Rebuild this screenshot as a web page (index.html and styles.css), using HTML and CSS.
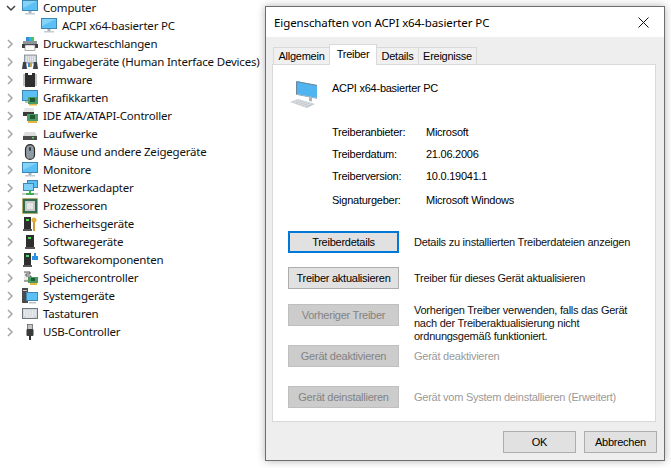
FILE: index.html
```html
<!DOCTYPE html>
<html lang="de">
<head>
  <meta charset="UTF-8" />
  <title>Geräte-Manager</title>
  <link rel="stylesheet" href="styles.css">
</head>
<body>

  <svg class="defs" width="0" height="0">
    <symbol id="chev" viewBox="0 0 8 10"><path d="M2 1l4 4-4 4" fill="none" stroke="#a6a6a6" stroke-width="1.5"/></symbol>
    <symbol id="chev-open" viewBox="0 0 10 8"><path d="M1 2l4 4 4-4" fill="none" stroke="#404040" stroke-width="1.5"/></symbol>
    <symbol id="monitor" viewBox="0 0 16 16"><rect x="0" y="0" width="16" height="11" fill="#3f87b3"/><rect x="1" y="1" width="14" height="9" fill="#5cc0f5"/><path d="M1 1h14L1 8z" fill="#86d3fa"/><rect x="6.5" y="11" width="3" height="2" fill="#a8b4bc"/><rect x="3" y="13" width="10" height="1.5" fill="#c4ccd2"/></symbol>
    <symbol id="printer" viewBox="0 0 16 16"><rect x="4" y="1" width="3" height="4" fill="#2f8fe0"/><rect x="7" y="1" width="3" height="4" fill="#35b8c4"/><rect x="10" y="1" width="2" height="4" fill="#4fc25a"/><rect x="1" y="5" width="14" height="3" fill="#8d959b"/><rect x="0" y="8" width="16" height="4" fill="#3e3e3e"/><rect x="3" y="9" width="10" height="5.5" fill="#fafafa" stroke="#777" stroke-width=".6"/></symbol>
    <symbol id="hid" viewBox="0 0 16 16"><rect x="2.5" y="1" width="12" height="8" fill="#c8ced3" stroke="#6d7780" stroke-width=".7"/><path d="M4 3h9M4 5h9M4 7h9" stroke="#fff" stroke-dasharray="1 1"/><path d="M0 15l1-7h3l1 7zM11 15l1-7h3l1 7z" fill="#3c4248"/><rect x="6" y="9" width="2" height="4" fill="#2f8fe0"/><rect x="8" y="9" width="2" height="4" fill="#d9a23a"/></symbol>
    <symbol id="chip" viewBox="0 0 16 16"><rect x="3" y="1" width="10" height="14" fill="#2e2e2e"/><rect x="6" y="1" width="4" height="2" fill="#fff"/><path d="M1 3h2M1 5h2M1 7h2M1 9h2M1 11h2M1 13h2M13 3h2M13 5h2M13 7h2M13 9h2M13 11h2M13 13h2" stroke="#8a8a8a"/></symbol>
    <symbol id="gpu" viewBox="0 0 16 16"><rect x="0" y="0" width="16" height="11" fill="#3f87b3"/><rect x="1" y="1" width="14" height="9" fill="#5cc0f5"/><rect x="3" y="11" width="6" height="2" fill="#b9c2c8"/><rect x="6" y="7" width="10" height="7" fill="#4c9a63"/><rect x="8" y="8" width="5" height="4" fill="#1f5a34"/><rect x="7" y="14" width="8" height="1.5" fill="#e5b53d"/></symbol>
    <symbol id="ide" viewBox="0 0 16 16"><path d="M3 0h9v4H1z" fill="#e4e4e4"/><rect x="1" y="4" width="11" height="4" fill="#3a3a3a"/><rect x="5" y="6" width="11" height="7" fill="#4c9a63"/><rect x="8" y="7" width="5" height="4" fill="#1f5a34"/><rect x="6" y="13" width="9" height="2" fill="#e5b53d"/></symbol>
    <symbol id="drive" viewBox="0 0 16 16"><path d="M3 6h10l2 4H1z" fill="#dcdcdc"/><rect x="1" y="10" width="14" height="4" fill="#4a4a4a"/><rect x="10" y="11" width="2" height="1.5" fill="#4fdc5a"/></symbol>
    <symbol id="mouse" viewBox="0 0 16 16"><rect x="3.5" y="0.6" width="9" height="14.8" rx="4.5" fill="#8f9aa3" stroke="#2c2c2c" stroke-width="1.2"/><rect x="7" y="3" width="2" height="4" rx="1" fill="#3c4248"/></symbol>
    <symbol id="net" viewBox="0 0 16 16"><rect x="5.5" y="0.5" width="10" height="7" fill="#5cc0f5" stroke="#3f87b3"/><rect x="1.5" y="3.5" width="10" height="7" fill="#7fd0f8" stroke="#3f87b3"/><rect x="0" y="13" width="16" height="2" fill="#c4ccd2"/><path d="M8 10v4M4 14h8" stroke="#3fae4e" stroke-width="2"/></symbol>
    <symbol id="cpu" viewBox="0 0 16 16"><rect x="0.5" y="0.5" width="15" height="15" fill="#2f6b4c" stroke="#c9a63a" stroke-dasharray="1 1"/><rect x="2" y="2" width="12" height="12" fill="#2f6b4c"/><rect x="3" y="3" width="10" height="10" fill="#c9c9c9"/><rect x="5" y="5" width="6" height="6" fill="#e6e6e6"/></symbol>
    <symbol id="sec" viewBox="0 0 16 16"><rect x="2" y="1" width="7" height="13" fill="#2e2e2e"/><rect x="1" y="13" width="9" height="2" fill="#555"/><rect x="4" y="3" width="3" height="2" fill="#4fdc5a"/><circle cx="12" cy="4" r="2.5" fill="#e0b040"/><rect x="11" y="6" width="2" height="9" fill="#d39c2e"/></symbol>
    <symbol id="soft" viewBox="0 0 16 16"><rect x="4" y="1" width="8" height="13" fill="#2e2e2e"/><rect x="3" y="13" width="10" height="2" fill="#555"/><rect x="6" y="3" width="3" height="2" fill="#4fdc5a"/></symbol>
    <symbol id="softc" viewBox="0 0 16 16"><rect x="2" y="1" width="7" height="13" fill="#2e2e2e"/><rect x="1" y="13" width="9" height="2" fill="#555"/><rect x="4" y="3" width="3" height="2" fill="#4fdc5a"/><rect x="10" y="4" width="6" height="4" fill="#2f8fe0"/><rect x="12" y="1" width="2" height="3" fill="#2f8fe0"/></symbol>
    <symbol id="store" viewBox="0 0 16 16"><path d="M2 2h6v2H4v2h5v5H2" fill="#e8e8e8" stroke="#444" stroke-width=".9"/><rect x="6" y="7" width="10" height="6" fill="#4c9a63"/><rect x="9" y="8" width="4" height="3" fill="#1f5a34"/><rect x="8" y="13" width="7" height="2" fill="#e5b53d"/></symbol>
    <symbol id="sys" viewBox="0 0 16 16"><rect x="0" y="0" width="6" height="15" fill="#4a4a4a"/><rect x="1" y="2" width="4" height="1" fill="#c8c8c8"/><rect x="4.5" y="4.5" width="11" height="8" fill="#5cc0f5" stroke="#3f87b3"/><rect x="7" y="14" width="7" height="1.5" fill="#b9c2c8"/></symbol>
    <symbol id="kbd" viewBox="0 0 16 16"><rect x="0.5" y="2.5" width="15" height="10" fill="#d2d7db" stroke="#6d7780"/><path d="M2 5h12M2 7h12M2 9h12M4 11h8" stroke="#fff" stroke-dasharray="1 .6"/></symbol>
    <symbol id="usb" viewBox="0 0 16 16"><rect x="5.5" y="0.5" width="5" height="5" fill="#c4c4c4" stroke="#555" stroke-width=".7"/><rect x="4.5" y="5" width="7" height="7" rx="1" fill="#3a3a3a"/><rect x="7" y="12" width="2" height="4" fill="#333"/></symbol>
  </svg>

  <ul class="tree">
    <li class="row"><svg class="chev-open"><use href="#chev-open"/></svg><svg class="ico"><use href="#monitor"/></svg>Computer</li>
    <li class="row child"><svg class="ico"><use href="#monitor"/></svg>ACPI x64-basierter PC</li>
    <li class="row"><svg class="chev"><use href="#chev"/></svg><svg class="ico"><use href="#printer"/></svg>Druckwarteschlangen</li>
    <li class="row"><svg class="chev"><use href="#chev"/></svg><svg class="ico"><use href="#hid"/></svg>Eingabegeräte (Human Interface Devices)</li>
    <li class="row"><svg class="chev"><use href="#chev"/></svg><svg class="ico"><use href="#chip"/></svg>Firmware</li>
    <li class="row"><svg class="chev"><use href="#chev"/></svg><svg class="ico"><use href="#gpu"/></svg>Grafikkarten</li>
    <li class="row"><svg class="chev"><use href="#chev"/></svg><svg class="ico"><use href="#ide"/></svg>IDE ATA/ATAPI-Controller</li>
    <li class="row"><svg class="chev"><use href="#chev"/></svg><svg class="ico"><use href="#drive"/></svg>Laufwerke</li>
    <li class="row"><svg class="chev"><use href="#chev"/></svg><svg class="ico"><use href="#mouse"/></svg>Mäuse und andere Zeigegeräte</li>
    <li class="row"><svg class="chev"><use href="#chev"/></svg><svg class="ico"><use href="#monitor"/></svg>Monitore</li>
    <li class="row"><svg class="chev"><use href="#chev"/></svg><svg class="ico"><use href="#net"/></svg>Netzwerkadapter</li>
    <li class="row"><svg class="chev"><use href="#chev"/></svg><svg class="ico"><use href="#cpu"/></svg>Prozessoren</li>
    <li class="row"><svg class="chev"><use href="#chev"/></svg><svg class="ico"><use href="#sec"/></svg>Sicherheitsgeräte</li>
    <li class="row"><svg class="chev"><use href="#chev"/></svg><svg class="ico"><use href="#soft"/></svg>Softwaregeräte</li>
    <li class="row"><svg class="chev"><use href="#chev"/></svg><svg class="ico"><use href="#softc"/></svg>Softwarekomponenten</li>
    <li class="row"><svg class="chev"><use href="#chev"/></svg><svg class="ico"><use href="#store"/></svg>Speichercontroller</li>
    <li class="row"><svg class="chev"><use href="#chev"/></svg><svg class="ico"><use href="#sys"/></svg>Systemgeräte</li>
    <li class="row"><svg class="chev"><use href="#chev"/></svg><svg class="ico"><use href="#kbd"/></svg>Tastaturen</li>
    <li class="row"><svg class="chev"><use href="#chev"/></svg><svg class="ico"><use href="#usb"/></svg>USB-Controller</li>
  </ul>

  <div class="dialog">
    <div class="titlebar">
      <span>Eigenschaften von ACPI x64-basierter PC</span>
      <svg class="close" viewBox="0 0 11 11"><path d="M.5.5l10 10M10.5.5l-10 10" stroke="#111" fill="none"/></svg>
    </div>
    <div class="dialog-body">
      <div class="tabs">
        <div class="tab tab-a">Allgemein</div>
        <div class="tab active">Treiber</div>
        <div class="tab tab-c">Details</div>
        <div class="tab tab-d">Ereignisse</div>
      </div>
      <div class="panel">
        <div class="device">
          <svg class="device-ico" viewBox="0 0 32 32">
            <path d="M8 3l21 4v13L8 16z" fill="#4fb4f0"/>
            <path d="M8 3l21 4v1L8 4zM8 3v13l1 .2V3.2z" fill="#6f8494"/>
            <path d="M8 16l21 4v.8L8 16.8z" fill="#8a9aa6"/>
            <path d="M21 19l3 .6v4l-3-.6z" fill="#aab3ba"/>
            <path d="M2 24l8-3 17 5-8 4z" fill="#c6ccd1"/>
            <path d="M5 24l7-2.5M7 25l7-2.5M10 26l7-2.5M13 27l7-2.5M16 28l7-2.5" stroke="#eef0f2" stroke-dasharray="1 1"/>
          </svg>
          <span>ACPI x64-basierter PC</span>
        </div>
        <dl class="info">
          <dt>Treiberanbieter:</dt><dd>Microsoft</dd>
          <dt>Treiberdatum:</dt><dd>21.06.2006</dd>
          <dt>Treiberversion:</dt><dd>10.0.19041.1</dd>
          <dt>Signaturgeber:</dt><dd>Microsoft Windows</dd>
        </dl>
        <div class="actions">
          <button class="btn focus">Treiberdetails</button><p>Details zu installierten Treiberdateien anzeigen</p>
          <button class="btn">Treiber aktualisieren</button><p>Treiber für dieses Gerät aktualisieren</p>
          <button class="btn off">Vorheriger Treiber</button><p class="multi">Vorherigen Treiber verwenden, falls das Gerät nach der Treiberaktualisierung nicht ordnungsgemäß funktioniert.</p>
          <button class="btn off">Gerät deaktivieren</button><p class="muted">Gerät deaktivieren</p>
          <button class="btn off">Gerät deinstallieren</button><p class="muted">Gerät vom System deinstallieren (Erweitert)</p>
        </div>
      </div>
      <div class="footer">
        <button class="btn small">OK</button>
        <button class="btn small">Abbrechen</button>
      </div>
    </div>
  </div>

</body>
</html>
```

FILE: styles.css
```css
* { box-sizing: border-box; }

body {
  margin: 0;
  width: 671px;
  height: 468px;
  overflow: hidden;
  position: relative;
  background: #fff;
  color: #000;
  font-family: "Noto Sans", sans-serif;
  font-size: 11.5px;
  letter-spacing: -0.2px;
}

.defs { position: absolute; }

/* device tree */
.tree {
  list-style: none;
  margin: -1px 0 0;
  padding: 0 0 0 6px;
}

.row {
  display: flex;
  align-items: center;
  height: 18px;
  padding-bottom: 2px;
  white-space: nowrap;
  color: #111;
}

.row.child { padding-left: 35px; }

.chev { width: 8px; height: 10px; margin: 2px 8px 0 0; }
.chev-open { width: 10px; height: 8px; margin: 2px 6px 0 0; }
.ico { width: 16px; height: 16px; margin: 2px 5px 0 0; flex: none; }

/* properties window */
.dialog {
  position: absolute;
  left: 265px;
  top: 6px;
  width: 400px;
  height: 455px;
  display: flex;
  flex-direction: column;
  background: #f0f0f0;
  border: 1px solid #6e6e6e;
  box-shadow: 0 0 8px rgba(0,0,0,0.3);
  font-family: "Liberation Sans", Arial, sans-serif;
  font-size: 11px;
  letter-spacing: -0.25px;
}

.titlebar {
  height: 30px;
  flex: none;
  background: #fff;
  display: flex;
  align-items: center;
  justify-content: space-between;
  padding: 0 15px 0 8px;
  font-family: "Noto Sans", sans-serif;
  font-size: 11.5px;
  letter-spacing: -0.1px;
}

.close { width: 11px; height: 11px; }

.dialog-body {
  flex: 1;
  display: flex;
  flex-direction: column;
  padding: 7px 8px 0 6px;
  background: #eee;
}

.tabs {
  display: flex;
  align-items: flex-end;
  height: 20px;
  padding-left: 2px;
  position: relative;
  z-index: 1;
}

.tab {
  height: 17px;
  background: #f0f0f0;
  border: 1px solid #d9d9d9;
  border-bottom: none;
  margin-left: -1px;
  text-align: center;
  line-height: 17px;
}

.tab-a { width: 57px; }
.tab-c { width: 43px; }
.tab-d { width: 59px; }

.tab.active {
  width: 48px;
  height: 21px;
  background: #fff;
  line-height: 18px;
  margin-bottom: -1px;
  position: relative;
  z-index: 2;
}

.panel {
  height: 358px;
  background: #fff;
  border: 1px solid #d9d9d9;
  padding: 14px 0 0 15px;
}

.device {
  display: flex;
  align-items: flex-start;
  gap: 12px;
  height: 42px;
  padding-top: 2px;
}

.device span { margin-top: 1px; }

.device-ico { width: 32px; height: 32px; margin-top: -3px; flex: none; }

.info {
  display: grid;
  grid-template-columns: 94px 1fr;
  grid-template-rows: 22px 22px 22px 26px;
  margin: 0 0 0 44px;
  height: 110px;
  align-items: center;
}

.info dt, .info dd { margin: 0; }

.actions {
  display: grid;
  grid-template-columns: 111px 1fr;
  grid-template-rows: 36px 37px 41px 41px 22px;
  column-gap: 15px;
}

.actions p {
  margin: 0;
  padding-top: 5px;
  line-height: 13px;
  color: #111;
}

.actions p.multi { padding-top: 0; max-width: 228px; }
.actions p.muted { color: #9a9a9a; }

.btn {
  width: 111px;
  height: 22px;
  padding: 0;
  background: #e1e1e1;
  border: 1px solid #adadad;
  font: inherit;
  letter-spacing: inherit;
  color: #000;
}

.btn.focus { border: 2px solid #0078d7; }

.btn.off {
  background: #ccc;
  border-color: #bfbfbf;
  color: #838383;
}

.footer {
  display: flex;
  justify-content: flex-end;
  gap: 8px;
  padding-top: 9px;
  margin-right: -1px;
}

.btn.small { width: 73px; height: 22px; }
```
